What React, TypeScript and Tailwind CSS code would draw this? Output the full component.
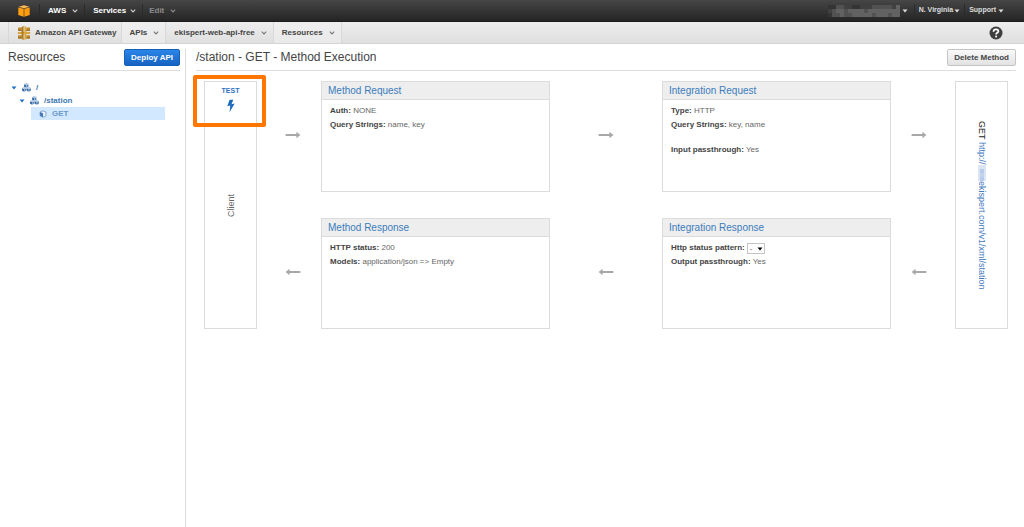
import React from "react";

function Chevron({ className }: { className: string }) {
  return (
    <svg viewBox="0 0 6 4" className={`h-1 w-1.5 shrink-0 ${className}`} fill="none" stroke="currentColor" strokeWidth="1.1">
      <path d="M.8 .7 3 3 5.200 .7" />
    </svg>
  );
}

function Caret({ className }: { className: string }) {
  return (
    <svg viewBox="0 0 6 4" className={`h-1 w-1.5 shrink-0 ${className}`} fill="currentColor">
      <path d="M.5 .6h5L3 3.600z" />
    </svg>
  );
}

function AwsCube() {
  return (
    <svg viewBox="0 0 12 12" className="h-3 w-3">
      <path d="M.5 1.800 6 .2l5.500 1.600L6 3.200z" fill="#ffb84d" />
      <path d="M.3 2.400 5.700 3.700v8L.3 9.900z" fill="#ff9f12" />
      <path d="M11.700 2.400 6.300 3.700v8l5.400-1.800z" fill="#ff9a0a" />
    </svg>
  );
}

function GatewayIcon() {
  return (
    <svg viewBox="0 0 14 14" className="h-3.5 w-3.5 shrink-0">
      <path d="M1 1.600h3.800v3.200H1zM9.200 1.600H13v3.200H9.200zM1 9.200h3.800v3.200H1zM9.200 9.200H13v3.200H9.200z" fill="#c08a2c" />
      <path d="M.8 6h12.400v2H.8z" fill="#d9a741" />
      <path d="M4.500 1 6.600 0v14l-2.100-1z" fill="#b07a1e" />
      <path d="M9.500 1 7.400 0v14l2.100-1z" fill="#d9a741" />
      <path d="M1 4.300h3.500M9.500 4.300H13M1 11.900h3.500M9.500 11.900H13" stroke="#8d6118" strokeWidth=".9" />
    </svg>
  );
}

function MiniCube({ x, y }: { x: number; y: number }) {
  return (
    <g transform={`translate(${x} ${y})`}>
      <path d="M0 1.100 2.200 .1l2.200 1-2.200 1z" fill="#a4bfdd" />
      <path d="M0 1.300 2.100 2.300v2.500L0 3.700z" fill="#356aa6" />
      <path d="M4.400 1.300 2.300 2.300v2.500l2.100-1.100z" fill="#5f8bbd" />
    </g>
  );
}

function CubesIcon() {
  return (
    <svg viewBox="0 0 9 9" className="h-[9px] w-[9px] shrink-0">
      <MiniCube x={2.1} y={0} />
      <MiniCube x={0} y={3.900} />
      <MiniCube x={4.600} y={3.900} />
    </svg>
  );
}

function MethodCube() {
  return (
    <svg viewBox="0 0 8 8" className="h-2 w-2 shrink-0">
      <path d="M4 .8 7 2 6.900 5.800 4 7.300 1.100 5.800 1 2z" fill="#e8f2fc" stroke="#6f97c4" strokeWidth=".8" />
      <path d="M1 2l3 1.300v4L1.100 5.800z" fill="#4579b5" />
    </svg>
  );
}

function Arrow({ left = false, className = "" }: { left?: boolean; className?: string }) {
  return (
    <div className={`flex items-center justify-center pb-1 ${className}`}>
      <svg viewBox="0 0 16 8" className={`h-2 w-4 ${left ? "rotate-180" : ""}`} fill="#a8a8a8">
        <path d="M.6 3h10.800V.7L15.400 4l-4 3.300V5H.6z" />
      </svg>
    </div>
  );
}

const mosaic = [
  [0, 0, 2, 2, 1, 1, 0, 0, 1, 1, 1, 2, 2, 2, 2, 2, 1, 3],
  [1, 2, 3, 3, 2, 3, 3, 3, 3, 2, 3, 3, 3, 3, 3, 3, 3, 3],
  [0, 2, 2, 3, 2, 2, 3, 3, 3, 3, 3, 2, 3, 3, 3, 2, 3, 3],
];
const shades = ["#343434", "#404040", "#525252", "#626262"];

function MaskedAccount() {
  return (
    <svg viewBox="0 0 72 12" className="h-3 w-[72px]" shapeRendering="crispEdges">
      {mosaic.map((row, y) =>
        row.map((s, x) => <rect key={`${x}-${y}`} x={x * 4} y={y * 4} width="4" height="4" fill={shades[s]} />)
      )}
    </svg>
  );
}

function Panel({ title, children }: { title: string; children: React.ReactNode }) {
  return (
    <section className="border border-[#dcdcdc] bg-white">
      <h2 className="border-b border-[#dcdcdc] bg-[#eeeeee] px-1.5 text-[10px] leading-[17px]">
        <a href="#" className="text-[#3b7cbd]">{title}</a>
      </h2>
      <div className="px-2 pt-1 text-[8px] leading-[14px] text-[#666666]">{children}</div>
    </section>
  );
}

function Field({ label, children }: { label: string; children: React.ReactNode }) {
  return (
    <p>
      <b className="text-[#444444]">{label}</b> {children}
    </p>
  );
}

const topItem = "flex h-3.5 items-center";
const crumb = "flex h-full items-center border-r border-[#d8d8d8]";

export default function App() {
  return (
    <div className="flex min-h-screen flex-col bg-white font-['Liberation_Sans',Arial,sans-serif] text-[8px] text-[#444444]">
      <header className="flex h-[22px] items-center justify-between border-b border-[#1c1c1c] bg-linear-to-b from-[#464646] to-[#252525] font-bold text-white">
        <nav className="flex items-center">
          <a href="#" aria-label="Home" className={`${topItem} border-r border-[#2b2b2b] pr-[9px] pl-[18px]`}>
            <AwsCube />
          </a>
          <button className={`${topItem} gap-1.5 border-r border-[#2b2b2b] pr-1.5 pl-2`}>
            AWS <Chevron className="text-[#cccccc]" />
          </button>
          <button className={`${topItem} gap-1 border-r border-[#2b2b2b] pr-1.5 pl-2`}>
            Services <Chevron className="text-[#cccccc]" />
          </button>
          <button className={`${topItem} gap-1.5 px-1.5 text-[#8c8c8c]`}>
            Edit <Chevron className="text-[#8c8c8c]" />
          </button>
        </nav>
        <div className="flex items-center pr-5 text-[7px] text-[#dddddd]">
          <button aria-label="Account" className={`${topItem} gap-0.5 border-r border-[#2b2b2b] pr-1.5`}>
            <MaskedAccount />
            <Caret className="" />
          </button>
          <button className={`${topItem} gap-px border-r border-[#2b2b2b] pr-1 pl-1`}>
            N. Virginia <Caret className="" />
          </button>
          <button className={`${topItem} gap-0.5 pl-1`}>
            Support <Caret className="" />
          </button>
        </div>
      </header>

      <div className="flex h-[22px] items-center justify-between border-b border-[#d4d4d4] bg-linear-to-b from-[#eeeeee] to-[#dfdfdf] pr-[21px] pl-2 font-bold">
        <nav className="flex h-full items-center">
          <a href="#" className={`${crumb} gap-1 border-l pr-1 pl-2`}>
            <GatewayIcon /> Amazon API Gateway
          </a>
          <button className={`${crumb} gap-1.5 bg-[#f0f0f0]/60 pr-1.5 pl-2`}>
            APIs <Chevron className="text-[#777777]" />
          </button>
          <button className={`${crumb} gap-1.5 pr-1.5 pl-2`}>
            ekispert-web-api-free <Chevron className="text-[#777777]" />
          </button>
          <button className={`${crumb} gap-1.5 bg-[#f0f0f0]/60 pr-1.5 pl-2`}>
            Resources <Chevron className="text-[#777777]" />
          </button>
        </nav>
        <button aria-label="Help">
          <svg viewBox="0 0 14 14" className="h-3.5 w-3.5">
            <circle cx="7" cy="7" r="6.500" fill="#3f3f3f" />
            <path d="M4.500 5.700C4.500 4.100 5.600 3.400 7 3.400s2.400.7 2.400 1.900c0 1.500-2.300 1.500-2.300 3.100" fill="none" stroke="#fff" strokeWidth="1.700" />
            <circle cx="7.100" cy="10.400" r="1" fill="#fff" />
          </svg>
        </button>
      </div>

      <div className="flex flex-1 pt-[5px]">
        <aside className="w-[186px] shrink-0 border-r border-[#dcdcdc] pr-[5px] pl-2">
          <div className="flex h-[22px] items-start justify-between border-b border-[#dddddd]">
            <h1 className="text-[12px] leading-4">Resources</h1>
            <button className="h-[17px] rounded-xs border border-[#1560b8] bg-linear-to-b from-[#2b86e8] to-[#1763c2] px-1.5 font-bold text-white">
              Deploy API
            </button>
          </div>
          <ul className="pt-[10px] pr-[15px] pl-[3px] font-bold text-[#3f78b3]">
            <li className="flex h-[13px] items-center gap-[5px]">
              <Caret className="text-[#1d6fc4]" />
              <CubesIcon />
              <a href="#">/</a>
            </li>
            <li className="flex h-[13px] items-center gap-[5px] pl-2">
              <Caret className="text-[#1d6fc4]" />
              <CubesIcon />
              <a href="#">/station</a>
            </li>
            <li className="ml-5 flex h-[13px] items-center gap-[5px] bg-[#d1e8ff] pl-2 text-[#6a98c9]">
              <MethodCube />
              <a href="#">GET</a>
            </li>
          </ul>
        </aside>

        <main className="min-w-0 flex-1 pr-2 pl-[10px]">
          <div className="flex h-[22px] items-start justify-between border-b border-[#dddddd]">
            <h1 className="text-[12px] leading-4">/station - GET - Method Execution</h1>
            <button className="h-[17px] rounded-xs border border-[#c4c4c4] bg-linear-to-b from-[#fafafa] to-[#e2e2e2] px-1.5 font-bold">
              Delete Method
            </button>
          </div>

          <div className="grid grid-cols-[53px_64fr_229fr_112fr_229fr_64fr_53px] grid-rows-[111px_111px] gap-y-[26px] px-2 pt-[10px]">
            <div className="relative row-span-2 flex flex-col items-center border border-[#dcdcdc]">
              <button className="flex h-[42px] w-full flex-col items-center gap-1 border-b border-[#dcdcdc] pt-[5px] text-[7px] leading-2 font-bold text-[#2a72bf]">
                TEST
                <svg viewBox="0 0 10 14" className="h-3.5 w-2.5" fill="#1c69c0">
                  <path d="M3.600.8 1.300 7.200l3-.7L3.500 13.200 8.700 4.500l-3.200.8L7.300.8z" />
                </svg>
              </button>
              <span className="mt-[70px] rotate-180 text-[9px] leading-3 text-[#666666] [writing-mode:vertical-rl]">Client</span>
              <div className="pointer-events-none absolute -top-[7px] -right-[10px] -left-3 h-[52px] rounded-xs border-4 border-[#ff7700]" />
            </div>
            <Arrow className="pl-2" />
            <Panel title="Method Request">
              <Field label="Auth:">NONE</Field>
              <Field label="Query Strings:">name, key</Field>
            </Panel>
            <Arrow />
            <Panel title="Integration Request">
              <Field label="Type:">HTTP</Field>
              <Field label="Query Strings:">key, name</Field>
              <div className="pt-[11px]">
                <Field label="Input passthrough:">Yes</Field>
              </div>
            </Panel>
            <Arrow className="pr-2" />
            <div className="row-span-2 flex items-start justify-center border border-[#dcdcdc] pt-[39px]">
              <p className="flex items-center text-[9px] leading-3 text-[#222222] [writing-mode:vertical-rl]">
                GET&nbsp;
                <a href="#" className="flex items-center text-[#3f78c0]">
                  http://
                  <svg viewBox="0 0 8 16" className="h-4 w-2" shapeRendering="crispEdges">
                    <path d="M0 0h8v16H0z" fill="#dbe5f4" />
                    <path d="M2 4h4v4H2zM2 12h4v4H2z" fill="#b7caea" />
                    <path d="M2 8h4v4H2z" fill="#c3d3ee" />
                  </svg>
                  ekispert.com/v1/xml/station
                </a>
              </p>
            </div>
            <Arrow left className="pl-2" />
            <Panel title="Method Response">
              <Field label="HTTP status:">200</Field>
              <Field label="Models:">application/json =&gt; Empty</Field>
            </Panel>
            <Arrow left />
            <Panel title="Integration Response">
              <div className="flex h-3.5 items-center gap-0.5">
                <label htmlFor="pattern" className="font-bold text-[#444444]">Http status pattern:</label>
                <span className="relative flex">
                  <select id="pattern" className="h-[11px] w-[18px] appearance-none border border-[#c4c4c4] bg-white pl-0.5 text-[8px] leading-[9px]">
                    <option>-</option>
                  </select>
                  <Caret className="pointer-events-none absolute top-1 right-0.5 text-black" />
                </span>
              </div>
              <Field label="Output passthrough:">Yes</Field>
            </Panel>
            <Arrow left className="pr-2" />
          </div>
        </main>
      </div>
    </div>
  );
}
